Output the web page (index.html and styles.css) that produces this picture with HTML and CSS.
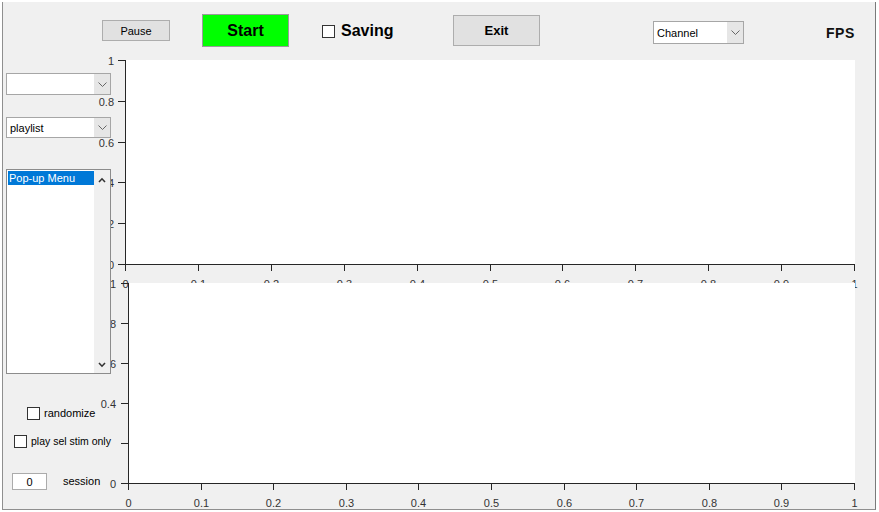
FILE: index.html
```html
<!DOCTYPE html>
<html>
<head>
<meta charset="utf-8">
<title>Stim GUI</title>
<link rel="stylesheet" href="styles.css">
</head>
<body>
<div class="fig">
  <div class="toolbar">
    <button class="btn btn-pause">Pause</button>
    <button class="btn btn-start">Start</button>
    <label class="saving"><span class="cb"></span><span class="saving-text">Saving</span></label>
    <button class="btn btn-exit">Exit</button>
    <div class="select select-channel">
      <span class="select-text">Channel</span>
      <span class="select-arrow"><svg width="9" height="5" viewBox="0 0 9 5"><path d="M0.5 0.5 L4.5 4.5 L8.5 0.5" fill="none" stroke="#666" stroke-width="1"/></svg></span>
    </div>
    <div class="fps">FPS</div>
  </div>
  <div class="main">
    <div class="side">
      <div class="select select-side dd1">
        <span class="select-text"></span>
        <span class="select-arrow"><svg width="9" height="5" viewBox="0 0 9 5"><path d="M0.5 0.5 L4.5 4.5 L8.5 0.5" fill="none" stroke="#666" stroke-width="1"/></svg></span>
      </div>
      <div class="select select-side dd2">
        <span class="select-text">playlist</span>
        <span class="select-arrow"><svg width="9" height="5" viewBox="0 0 9 5"><path d="M0.5 0.5 L4.5 4.5 L8.5 0.5" fill="none" stroke="#666" stroke-width="1"/></svg></span>
      </div>
      <div class="listbox">
        <div class="list-items">
          <div class="list-item selected">Pop-up Menu</div>
        </div>
        <div class="scrollbar">
          <svg width="8" height="6" viewBox="0 0 8 6"><path d="M1 5 L4 1.8 L7 5" fill="none" stroke="#333" stroke-width="1.6"/></svg>
          <svg width="8" height="6" viewBox="0 0 8 6"><path d="M1 1 L4 4.2 L7 1" fill="none" stroke="#333" stroke-width="1.6"/></svg>
        </div>
      </div>
      <label class="check-row randomize"><span class="cb"></span><span>randomize</span></label>
      <label class="check-row playsel"><span class="cb"></span><span>play sel stim only</span></label>
      <div class="session-row">
        <div class="edit">0</div>
        <span class="session-text">session</span>
      </div>
    </div>
    <div class="plots">
      <div class="axes axes-top">
        <i class="yt" style="top:0px"></i><span class="yl" style="top:0px">1</span>
        <i class="yt" style="top:41px"></i><span class="yl" style="top:41px">0.8</span>
        <i class="yt" style="top:82px"></i><span class="yl" style="top:82px">0.6</span>
        <i class="yt" style="top:122px"></i><span class="yl" style="top:122px">0.4</span>
        <i class="yt" style="top:163px"></i><span class="yl" style="top:163px">0.2</span>
        <i class="yt" style="top:204px"></i><span class="yl" style="top:204px">0</span>
        <i class="xt" style="left:0px"></i><span class="xl" style="left:0px">0</span>
        <i class="xt" style="left:73px"></i><span class="xl" style="left:73px">0.1</span>
        <i class="xt" style="left:146px"></i><span class="xl" style="left:146px">0.2</span>
        <i class="xt" style="left:219px"></i><span class="xl" style="left:219px">0.3</span>
        <i class="xt" style="left:292px"></i><span class="xl" style="left:292px">0.4</span>
        <i class="xt" style="left:365px"></i><span class="xl" style="left:365px">0.5</span>
        <i class="xt" style="left:437px"></i><span class="xl" style="left:437px">0.6</span>
        <i class="xt" style="left:510px"></i><span class="xl" style="left:510px">0.7</span>
        <i class="xt" style="left:583px"></i><span class="xl" style="left:583px">0.8</span>
        <i class="xt" style="left:656px"></i><span class="xl" style="left:656px">0.9</span>
        <i class="xt" style="left:729px"></i><span class="xl" style="left:729px">1</span>
      </div>
      <div class="axes axes-bottom">
        <i class="yt" style="top:0px"></i><span class="yl" style="top:0px">1</span>
        <i class="yt" style="top:40px"></i><span class="yl" style="top:40px">0.8</span>
        <i class="yt" style="top:80px"></i><span class="yl" style="top:80px">0.6</span>
        <i class="yt" style="top:120px"></i><span class="yl" style="top:120px">0.4</span>
        <i class="yt" style="top:160px"></i><span class="yl yl-covered" style="top:160px">0.2</span>
        <i class="yt" style="top:200px"></i><span class="yl" style="top:200px">0</span>
        <i class="xt" style="left:0px"></i><span class="xl" style="left:0px">0</span>
        <i class="xt" style="left:73px"></i><span class="xl" style="left:73px">0.1</span>
        <i class="xt" style="left:145px"></i><span class="xl" style="left:145px">0.2</span>
        <i class="xt" style="left:218px"></i><span class="xl" style="left:218px">0.3</span>
        <i class="xt" style="left:290px"></i><span class="xl" style="left:290px">0.4</span>
        <i class="xt" style="left:363px"></i><span class="xl" style="left:363px">0.5</span>
        <i class="xt" style="left:436px"></i><span class="xl" style="left:436px">0.6</span>
        <i class="xt" style="left:508px"></i><span class="xl" style="left:508px">0.7</span>
        <i class="xt" style="left:581px"></i><span class="xl" style="left:581px">0.8</span>
        <i class="xt" style="left:653px"></i><span class="xl" style="left:653px">0.9</span>
        <i class="xt" style="left:726px"></i><span class="xl" style="left:726px">1</span>
      </div>
    </div>
  </div>
</div>
</body>
</html>
```

FILE: styles.css
```css
* { box-sizing: border-box; }

html, body {
  margin: 0;
  padding: 0;
  background: #ffffff;
  font-family: "Liberation Sans", Arial, sans-serif;
  font-size: 11px;
  color: #000;
}

.fig {
  margin: 2px 0 0 2px;
  width: 874px;
  height: 508px;
  background: #f0f0f0;
  border-left: 1px solid #8f8f8f;
  border-right: 1px solid #7a7a7a;
  border-bottom: 1px solid #8f8f8f;
  overflow: hidden;
}

/* ---------- top bar ---------- */
.toolbar {
  display: flex;
  align-items: flex-start;
  height: 58px;
}

.btn {
  font-family: "Liberation Sans", Arial, sans-serif;
  padding: 0;
  margin: 0;
  border: 1px solid #adadad;
  background: #e1e1e1;
  color: #000;
  display: flex;
  align-items: center;
  justify-content: center;
}

.btn-pause {
  margin-left: 99px;
  margin-top: 18px;
  width: 68px;
  height: 21px;
  font-size: 11px;
}

.btn-start {
  margin-left: 32px;
  margin-top: 12px;
  width: 87px;
  height: 33px;
  background: #00ff00;
  border-color: #9a9a9a;
  font-size: 16px;
  font-weight: bold;
}

.saving {
  margin-left: 33px;
  margin-top: 19px;
  width: 131px;
  height: 20px;
  display: flex;
  align-items: center;
  gap: 6px;
  font-size: 16px;
  font-weight: bold;
}

.cb {
  display: block;
  flex: none;
  width: 13px;
  height: 13px;
  border: 1px solid #333;
  background: #fff;
}

.btn-exit {
  margin-top: 13px;
  width: 87px;
  height: 31px;
  font-size: 13px;
  font-weight: bold;
  padding-bottom: 1px;
}

.select {
  display: flex;
  background: #fff;
  border: 1px solid #a6a6a6;
}

.select-text {
  flex: 1;
  padding-left: 3px;
  display: flex;
  align-items: center;
  font-size: 11px;
}

.select-arrow {
  width: 16px;
  flex: none;
  background: #e6e6e6;
  display: flex;
  align-items: center;
  justify-content: center;
}

.select-channel {
  margin-left: 113px;
  margin-top: 19px;
  width: 91px;
  height: 23px;
}

.fps {
  margin-left: 82px;
  margin-top: 21px;
  line-height: 20px;
  font-size: 14px;
  font-weight: bold;
  letter-spacing: 0.5px;
  color: #111;
}

/* ---------- main area ---------- */
.main {
  display: flex;
}

.side {
  position: relative;
  z-index: 2;
  width: 122px;
  flex: none;
  display: flex;
  flex-direction: column;
  align-items: flex-start;
}

.select-side {
  margin-left: 3px;
  width: 105px;
}

.dd1 {
  margin-top: 13px;
  height: 22px;
}

.dd2 {
  margin-top: 22px;
  height: 21px;
}

.listbox {
  margin-top: 31px;
  margin-left: 3px;
  width: 105px;
  height: 205px;
  border: 1px solid #8c8c8c;
  background: #fff;
  display: flex;
}

.list-items {
  flex: 1;
  padding: 1px 0 0 1px;
}

.list-item {
  height: 14px;
  line-height: 14px;
  padding-left: 1px;
  font-size: 11px;
}

.list-item.selected {
  background: #0078d7;
  color: #fff;
}

.scrollbar {
  width: 16px;
  flex: none;
  background: #f0f0f0;
  display: flex;
  flex-direction: column;
  align-items: center;
  justify-content: space-between;
  padding: 7px 0 5px;
}

.check-row {
  display: flex;
  align-items: center;
  gap: 4px;
  height: 16px;
  font-size: 11px;
}

.randomize {
  margin-top: 31px;
  margin-left: 24px;
}

.playsel {
  margin-top: 12px;
  margin-left: 9px;
  padding-left: 2px;
  width: 108px;
  font-size: 10.5px;
  background: #f0f0f0;
}

.session-row {
  margin-top: 24px;
  margin-left: 9px;
  display: flex;
  align-items: center;
  gap: 16px;
}

.edit {
  width: 35px;
  height: 17px;
  background: #fff;
  border: 1px solid #ababab;
  display: flex;
  align-items: center;
  justify-content: center;
  font-size: 11px;
}

.session-text {
  font-size: 11px;
  margin-top: -2px;
}

/* ---------- axes ---------- */
.plots {
  display: flex;
  flex-direction: column;
  align-items: flex-start;
}

.axes {
  position: relative;
  background: #fff;
  color: #333;
  font-size: 11px;
}

.axes::before {
  content: "";
  position: absolute;
  left: 0;
  top: 0;
  bottom: 0;
  width: 1px;
  background: #262626;
}

.axes::after {
  content: "";
  position: absolute;
  left: 0;
  right: 0;
  bottom: 0;
  height: 1px;
  background: #262626;
}

.axes-top {
  width: 730px;
  height: 205px;
}

.axes-bottom {
  margin-top: 18px;
  margin-left: 3px;
  width: 727px;
  height: 201px;
}

.xt {
  position: absolute;
  top: calc(100% - 1px);
  width: 1px;
  height: 7px;
  background: #262626;
}

.xl {
  position: absolute;
  top: calc(100% + 13px);
  width: 30px;
  margin-left: -14.5px;
  text-align: center;
  line-height: 13px;
}

.yt {
  position: absolute;
  left: -7px;
  width: 7px;
  height: 1px;
  background: #262626;
}

.yl {
  position: absolute;
  right: calc(100% + 11px);
  margin-top: -5px;
  line-height: 13px;
  text-align: right;
  white-space: nowrap;
}

.axes-bottom .yl {
  right: calc(100% + 12px);
}

/* label hidden behind the "play sel stim only" control in the original */
.yl-covered {
  visibility: hidden;
}
```
